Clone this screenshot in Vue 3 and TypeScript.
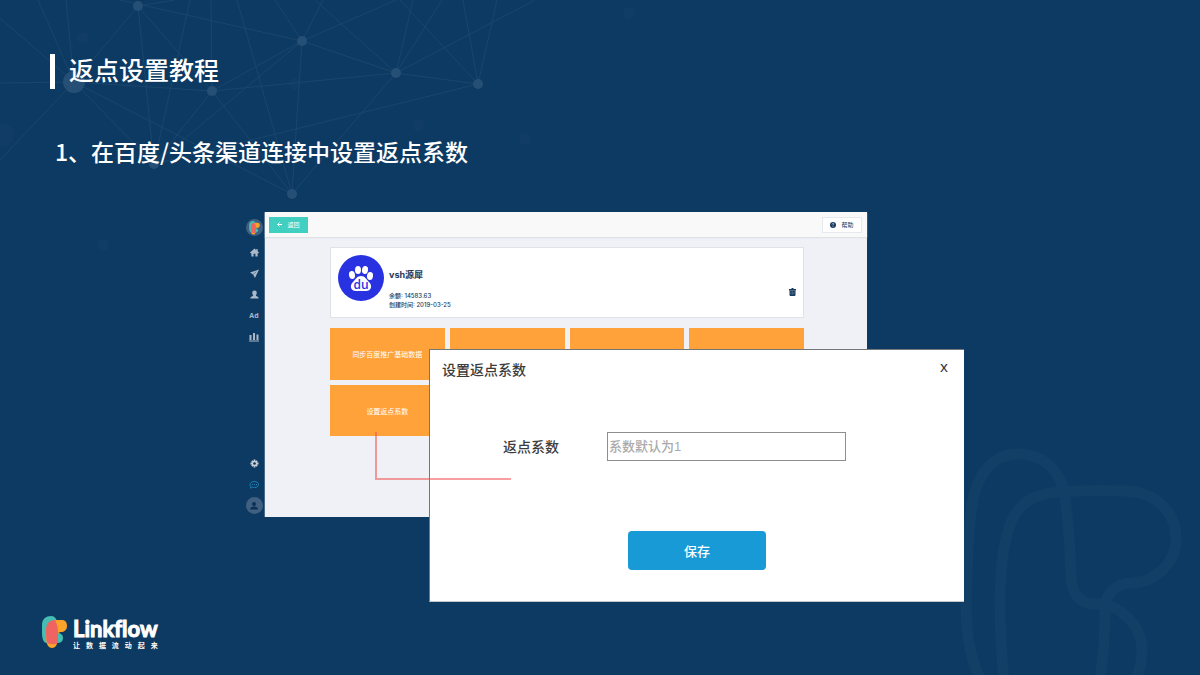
<script setup lang="ts">
import { ref } from 'vue'

const ratio = ref('')

const tiles: string[] = ['同步百度推广基础数据', '', '', '', '设置返点系数']

const nodes: [number, number, number][] = [
  [138, 6, 5], [302, 41, 5], [396, 73, 5], [478, 84, 5],
  [74, 82, 11], [212, 91, 5], [154, 164, 5], [292, 194, 5],
]

const faintNodes: [number, number, number][] = [
  [83, 38, 6], [103, 245, 6], [525, 139, 6], [629, 13, 6], [2, 135, 12], [418, 125, 6], [295, 84, 6],
]

const lines: [number, number, number, number][] = [
  [74, 82, 138, 6], [74, 82, 0, 18], [74, 82, 38, 0], [74, 82, 66, 0], [74, 82, 0, 83],
  [74, 82, 0, 160], [74, 82, 212, 91], [74, 82, 154, 164], [74, 82, 292, 194],
  [120, 0, 302, 41], [138, 6, 175, 0], [138, 6, 212, 91], [138, 6, 154, 164],
  [190, 0, 154, 164], [211, 0, 212, 91], [237, 0, 292, 194],
  [302, 41, 275, 0], [302, 41, 323, 0], [302, 41, 396, 0], [302, 41, 396, 73],
  [302, 41, 212, 91], [302, 41, 154, 164], [302, 41, 292, 194],
  [396, 73, 212, 91], [396, 73, 478, 84], [396, 73, 292, 194], [396, 73, 315, 0],
  [396, 73, 413, 0], [396, 73, 442, 0], [396, 73, 535, 0],
  [478, 84, 400, 0], [478, 84, 463, 0], [478, 84, 497, 0], [478, 84, 154, 164],
  [212, 91, 292, 194], [212, 91, 154, 164],
]
</script>

<template>
  <main class="slide">
    <svg class="network" width="660" height="260" viewBox="0 0 660 260" aria-hidden="true">
      <circle v-for="(n, i) in faintNodes" :key="'f' + i" :cx="n[0]" :cy="n[1]" :r="n[2]" fill="#103c66" />
      <line v-for="(l, i) in lines" :key="'l' + i" :x1="l[0]" :y1="l[1]" :x2="l[2]" :y2="l[3]" stroke="#1a466d" />
      <circle v-for="(n, i) in nodes" :key="'n' + i" :cx="n[0]" :cy="n[1]" :r="n[2]" fill="#264f75" />
    </svg>
    <svg class="watermark" width="240" height="235" viewBox="960 440 240 235" aria-hidden="true">
      <g fill="none" stroke="#123f66" stroke-width="11">
        <path d="M981 680C970 660 966 632 966 602C967 570 968 540 971 513C974 476 992 454 1018 454C1041 454 1056 467 1063 487C1069 515 1070 550 1071 576C1071 593 1080 604 1095 604C1122 604 1142 627 1142 650C1142 663 1139 672 1135 680" />
        <path d="M1004 680C1001 652 1000 625 1000 597C1001 565 1003 541 1012 520C1021 501 1036 494 1058 492C1080 490 1102 490 1127 491C1158 493 1176 514 1176 538C1176 563 1156 582 1132 583C1116 583 1105 593 1105 611C1105 635 1103 657 1100 680" />
      </g>
    </svg>

    <h1 class="title">返点设置教程</h1>
    <h2 class="step">1、在百度/头条渠道连接中设置返点系数</h2>

    <section class="stage">
      <nav class="rail" aria-label="主导航">
        <span class="rail-logo">
          <svg width="11" height="14" viewBox="0 0 25 33">
            <path d="M9 0c4 0 6 3 6 8v9c4 0 6 2 6 5 0 4-3 5-6 5H5C1 27 0 22 0 16V9C0 3 4 0 9 0z" fill="#46bdb2" />
            <path d="M14 4h6c3 0 5 2 5 6s-3 6-6 6c-2 0-3 1-3 3 0 9-2 13-6 13s-6-4-6-12z" fill="#f9a32b" />
            <path d="M13 4c1 3 3 5 3 12v10c0 3-10 3-11 0-1-4-1-7-1-12 0-6 3-10 9-10z" fill="#ef6461" />
          </svg>
        </span>
        <a class="rail-item" href="#home" aria-label="首页">
          <svg width="9" height="9" viewBox="0 0 20 20"><path d="M10 1 0 10l2 2 1-1v8h5v-6h4v6h5v-8l1 1 2-2-3-3V2h-3v3z" fill="#aab8c8" /></svg>
        </a>
        <a class="rail-item" href="#send" aria-label="触达">
          <svg width="9" height="9" viewBox="0 0 20 20"><path d="M20 1 0 8l7 4 4 8z" fill="#aab8c8" /><path d="m7 12 7-6" stroke="#0d3a62" stroke-width="1" /></svg>
        </a>
        <a class="rail-item" href="#users" aria-label="用户">
          <svg width="9" height="9" viewBox="0 0 20 20"><path d="M10 1c4 0 5 3 5 5 0 3-1 4-2 6 0 2 6 2 6 5v2H1v-2c0-3 6-3 6-5-1-2-2-3-2-6 0-2 1-5 5-5z" fill="#aab8c8" /></svg>
        </a>
        <a class="rail-item" href="#ad">Ad</a>
        <a class="rail-item" href="#report" aria-label="报表">
          <svg width="10" height="10" viewBox="0 0 20 20"><path d="M1 6h4v10H1zM8 2h4v14H8zM15 5h4v11h-4zM0 17h20v2H0z" fill="#aab8c8" /></svg>
        </a>
        <span class="rail-space"></span>
        <a class="rail-item" href="#settings" aria-label="设置">
          <svg width="9" height="9" viewBox="0 0 20 20">
            <g stroke="#c5ced8" stroke-width="4"><path d="M10 1v18M1 10h18M4 4l12 12M16 4 4 16" /></g>
            <circle cx="10" cy="10" r="6" fill="#c5ced8" /><circle cx="10" cy="10" r="3" fill="#0d3a62" />
          </svg>
        </a>
        <a class="rail-item" href="#chat" aria-label="消息">
          <svg width="10" height="8" viewBox="0 0 20 16">
            <path d="M11 1c5 0 8 3 8 6s-3 6-8 6c-2 0-3 0-4-1-1 1-3 2-5 2 1-1 2-2 2-3-2-1-2-3-2-4 0-3 4-6 9-6z" fill="none" stroke="#1d82b8" stroke-width="2" />
            <path d="M6 7h2M10 7h2M14 7h2" stroke="#1d82b8" stroke-width="2" />
          </svg>
        </a>
        <a class="rail-item" href="#account" aria-label="账户">
          <span class="avatar">
            <svg width="8" height="8" viewBox="0 0 16 16"><circle cx="8" cy="4" r="4" fill="#0d3055" /><path d="M0 15c0-8 16-8 16 0z" fill="#0d3055" /></svg>
          </span>
        </a>
      </nav>

      <div class="app">
        <header class="topbar">
          <button class="back" type="button">
            <svg width="5" height="5" viewBox="0 0 10 10"><path d="M10 5H2M5 1 1 5l4 4" fill="none" stroke="#fff" stroke-width="2" /></svg>
            返回
          </button>
          <button class="help" type="button">
            <svg width="6" height="6" viewBox="0 0 12 12">
              <circle cx="6" cy="6" r="6" fill="#183a5e" />
              <path d="M4 5c0-3 4-3 4-1 0 1-2 1-2 3M6 8v2" fill="none" stroke="#fff" stroke-width="1" />
            </svg>
            帮助
          </button>
        </header>
        <div class="content">
          <article class="card">
            <svg class="baidu" width="46" height="46" viewBox="0 0 46 46" aria-hidden="true">
              <circle cx="23" cy="23" r="23" fill="#2932e1" />
              <g fill="#fff">
                <ellipse cx="14" cy="20" rx="3" ry="4" transform="rotate(-10 14 20)" />
                <ellipse cx="20" cy="15" rx="3" ry="4" />
                <ellipse cx="27" cy="15" rx="3" ry="4" transform="rotate(8 27 15)" />
                <ellipse cx="32" cy="21" rx="3" ry="4" transform="rotate(8 32 21)" />
                <path d="M23 21c4 0 5 3 8 6 4 4 2 9-3 9H18c-5 0-7-5-3-9 3-3 4-6 8-6z" />
              </g>
              <text class="du" x="23" y="34" text-anchor="middle">du</text>
            </svg>
            <div class="info">
              <h3>vsh源犀</h3>
              <p>余额: 14583.63</p>
              <p>创建时间: 2019-03-25</p>
            </div>
            <button class="trash" type="button" aria-label="删除">
              <svg width="7" height="8" viewBox="0 0 14 16"><path d="M5 0h4v2h5v3H0V2h5z" fill="#183a5e" /><path d="M1 5h12v9l-1 2H2l-1-2z" fill="#183a5e" /><path d="M4 7v6M7 7v6M10 7v6" stroke="#7d90a5" /></svg>
            </button>
          </article>
          <div class="tiles">
            <button v-for="(t, i) in tiles" :key="i" class="tile" type="button">{{ t }}</button>
          </div>
        </div>
      </div>

      <form class="dialog" role="dialog" aria-labelledby="dlg-title" @submit.prevent>
        <header class="dialog-head">
          <h3 id="dlg-title">设置返点系数</h3>
          <button class="close" type="button">x</button>
        </header>
        <div class="field">
          <label for="ratio">返点系数</label>
          <input id="ratio" v-model="ratio" type="text" placeholder="系数默认为1" />
        </div>
        <button class="save" type="submit">保存</button>
      </form>
      <span class="connector"></span>
    </section>

    <footer class="brand">
      <svg width="25" height="33" viewBox="0 0 25 33" aria-hidden="true">
        <path d="M9 0c4 0 6 3 6 8v9c4 0 6 2 6 5 0 4-3 5-6 5H5C1 27 0 22 0 16V9C0 3 4 0 9 0z" fill="#46bdb2" />
        <path d="M14 4h6c3 0 5 2 5 6s-3 6-6 6c-2 0-3 1-3 3 0 9-2 13-6 13s-6-4-6-12z" fill="#f9a32b" />
        <path d="M13 4c1 3 3 5 3 12v10c0 3-10 3-11 0-1-4-1-7-1-12 0-6 3-10 9-10z" fill="#ef6461" />
      </svg>
      <div class="wordmark">
        <strong>Linkflow</strong>
        <small>让数据流动起来</small>
      </div>
    </footer>
  </main>
</template>

<style>
body {
  margin: 0;
}
</style>

<style scoped>
.slide {
  position: relative;
  display: flex;
  flex-direction: column;
  box-sizing: border-box;
  min-height: 100vh;
  padding: 54px 0 26px;
  overflow: hidden;
  background: #0d3a62;
  color: #fff;
  font-family: "Noto Sans CJK SC", sans-serif;
}
.slide * {
  box-sizing: border-box;
}
.network {
  position: absolute;
  top: 0;
  left: 0;
}
.watermark {
  position: absolute;
  right: 0;
  bottom: 0;
}
h1,
h2,
h3,
p {
  margin: 0;
}
button {
  padding: 0;
  border: 0;
  font-family: inherit;
  cursor: pointer;
}
.title {
  position: relative;
  margin-left: 50px;
  padding: 0 0 5px 14px;
  border-left: 5px solid #fff;
  font-size: 25px;
  font-weight: 500;
  line-height: 30px;
}
.step {
  position: relative;
  margin: 45px 0 43px 55px;
  font-size: 23px;
  font-weight: 500;
  line-height: 35px;
}
.stage {
  position: relative;
  display: flex;
  margin: 0 236px 0 244px;
}
.rail {
  display: flex;
  flex: none;
  flex-direction: column;
  align-items: center;
  width: 21px;
  padding: 7px 0 1px;
  border-right: 1px solid #4a6b8a;
}
.rail-logo,
.avatar {
  display: flex;
  align-items: center;
  justify-content: center;
  width: 17px;
  height: 17px;
  border-radius: 50%;
  background: #3f6080;
}
.rail-logo {
  margin-bottom: 6px;
}
.rail-item {
  display: flex;
  align-items: center;
  justify-content: center;
  height: 21px;
  color: #aab8c8;
  font: 700 7px "Open Sans", sans-serif;
  text-decoration: none;
}
.rail-space {
  flex: 1;
}
.app {
  flex: 1;
  margin-right: 97px;
  background: #eff1f6;
  color: #183a5e;
}
.topbar {
  display: flex;
  align-items: center;
  justify-content: space-between;
  height: 25px;
  padding: 0 5px 0 4px;
  background: #f9f9fa;
  box-shadow: 0 1px 1px #dfe1e5;
}
.back,
.help {
  display: flex;
  align-items: center;
  justify-content: center;
  gap: 5px;
  width: 39px;
  height: 16px;
  background: #41cfc1;
  color: #fff;
  font-size: 6px;
}
.help {
  width: 40px;
  border: 1px solid #e6e9ec;
  background: #fff;
  color: #183a5e;
}
.content {
  padding: 10px 63px 81px 65px;
}
.card {
  display: flex;
  height: 71px;
  padding: 7px;
  border: 1px solid #e0e2e6;
  background: #fff;
}
.baidu {
  flex: none;
}
.du {
  fill: #2932e1;
  font: 600 12px "Open Sans", sans-serif;
}
.info {
  flex: 1;
  padding: 13px 0 0 5px;
  font: 500 6px/9px Inter, "Noto Sans CJK SC", sans-serif;
}
.info h3 {
  margin-bottom: 9px;
  font-size: 9px;
  line-height: 14px;
}
.trash {
  align-self: flex-start;
  margin-top: 33px;
  height: 8px;
  background: none;
  line-height: 0;
}
.tiles {
  display: grid;
  grid-template-columns: repeat(4, 1fr);
  grid-template-rows: 52px 51px;
  gap: 5px;
  margin-top: 10px;
}
.tile {
  background: #ffa23a;
  color: #fff;
  font-size: 7px;
}
.dialog {
  position: absolute;
  top: 137px;
  right: 0;
  left: 185px;
  display: flex;
  flex-direction: column;
  padding-bottom: 31px;
  border: 1px solid #c4c6c8;
  border-top-color: #74777a;
  border-left-color: #74777a;
  border-right: 0;
  background: #fff;
  color: #3b3b3b;
}
.dialog-head {
  display: flex;
  justify-content: space-between;
  padding: 8px 15px 0 12px;
}
.dialog-head h3 {
  font-size: 14px;
  font-weight: 500;
  line-height: 22px;
}
.close {
  width: 10px;
  height: 16px;
  background: none;
  color: #333;
  font: 15px/16px "Noto Sans", sans-serif;
}
.field {
  display: flex;
  align-items: center;
  margin: 52px 0 70px 73px;
  font-size: 14px;
  font-weight: 500;
}
.field label {
  width: 104px;
  padding-bottom: 2px;
}
.field input {
  width: 239px;
  height: 29px;
  padding: 0 1px;
  border: 1px solid #8e8e8e;
  border-radius: 0;
  background: #fff;
  color: #3b3b3b;
  font: 500 13px "Liberation Sans", "Noto Sans CJK SC", sans-serif;
}
.field input::placeholder {
  color: #aaa;
  opacity: 1;
}
.save {
  align-self: center;
  width: 138px;
  height: 39px;
  border-radius: 4px;
  background: #189ad6;
  color: #fff;
  font-size: 13px;
  font-weight: 500;
}
.connector {
  position: absolute;
  top: 220px;
  left: 131px;
  width: 136px;
  height: 48px;
  border: solid rgba(240, 80, 80, 0.55);
  border-width: 0 0 2px 2px;
  pointer-events: none;
}
.brand {
  position: relative;
  display: flex;
  gap: 6px;
  margin: auto 0 0 42px;
}
.wordmark {
  display: flex;
  flex-direction: column;
}
.wordmark strong {
  font: 700 22px/26px Lato, sans-serif;
  font-variant-ligatures: none;
  -webkit-text-stroke: 1px #fff;
}
.wordmark small {
  font-size: 7px;
  font-weight: 700;
  line-height: 7px;
  text-align-last: justify;
}
</style>
